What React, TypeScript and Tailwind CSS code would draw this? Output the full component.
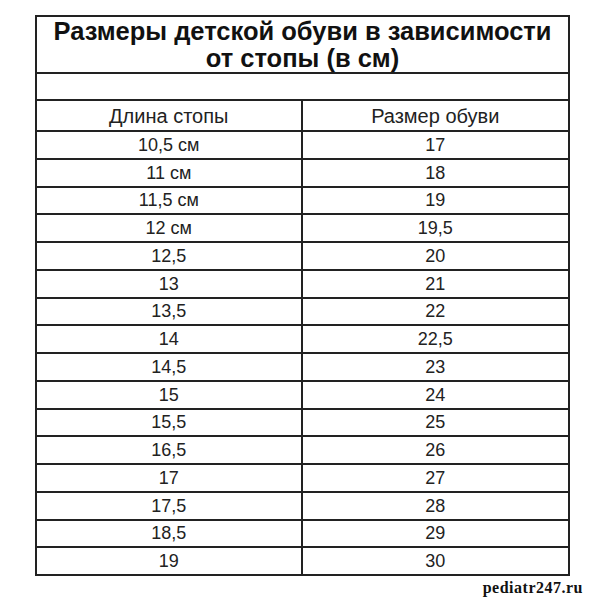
import React from "react";

const rows: [string, string][] = [
  ["10,5 см", "17"],
  ["11 см", "18"],
  ["11,5 см", "19"],
  ["12 см", "19,5"],
  ["12,5", "20"],
  ["13", "21"],
  ["13,5", "22"],
  ["14", "22,5"],
  ["14,5", "23"],
  ["15", "24"],
  ["15,5", "25"],
  ["16,5", "26"],
  ["17", "27"],
  ["17,5", "28"],
  ["18,5", "29"],
  ["19", "30"],
];

export default function App() {
  return (
    <div className="w-[603px] h-[599px] bg-white font-['Liberation_Sans',Arial,sans-serif] text-[#222]">
      <div className="pt-[15px] pl-[35px] w-[583px]">
        <div className="w-[535px] border-2 border-[#222]">
          <div className="h-[55px] flex flex-col items-center justify-center font-bold text-[25.5px] leading-[27px] text-[#111]">
            <div>Размеры детской обуви в зависимости</div>
            <div>от стопы (в см)</div>
          </div>
          <div className="h-[27px] border-t-2 border-[#222]" />
          <div className="h-[31px] border-t-2 border-[#222] grid grid-cols-2 text-[20px] leading-none">
            <div className="flex items-center justify-center border-r-2 border-[#222]">Длина стопы</div>
            <div className="flex items-center justify-center">Размер обуви</div>
          </div>
          {rows.map(([a, b], i) => (
            <div
              key={i}
              className="h-[27.75px] border-t-2 border-[#222] grid grid-cols-2 text-[18px] leading-none"
            >
              <div className="flex items-center justify-center border-r-2 border-[#222]">{a}</div>
              <div className="flex items-center justify-center">{b}</div>
            </div>
          ))}
        </div>
        <div className="flex justify-end pt-[4px]">
          <span className="font-['Liberation_Serif',serif] font-bold text-[16px] tracking-[0.5px] leading-none text-[#111]">
            pediatr247.ru
          </span>
        </div>
      </div>
    </div>
  );
}
